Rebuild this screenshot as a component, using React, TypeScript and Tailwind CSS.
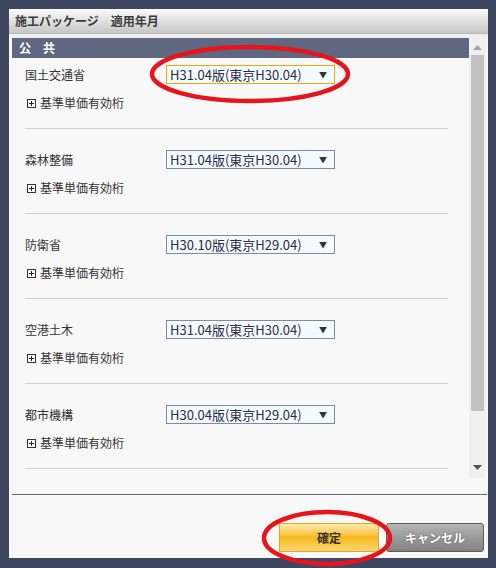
import React from "react";

const rows = [
  { label: "国土交通省", value: "H31.04版(東京H30.04)", active: true },
  { label: "森林整備", value: "H31.04版(東京H30.04)" },
  { label: "防衛省", value: "H30.10版(東京H29.04)" },
  { label: "空港土木", value: "H31.04版(東京H30.04)" },
  { label: "都市機構", value: "H30.04版(東京H29.04)" },
];

const font = { fontFamily: '"Noto Sans CJK JP", "Noto Sans", sans-serif' };

function PlusBox() {
  return (
    <svg width="9" height="9" viewBox="0 0 9 9" className="block">
      <rect x="0.5" y="0.5" width="8" height="8" fill="#fff" stroke="#333" />
      <path d="M2 4.5h5M4.5 2v5" stroke="#222" strokeWidth="1" />
    </svg>
  );
}

export default function App() {
  return (
    <div
      className="relative w-[496px] h-[568px] bg-[#3d4760] pl-[9px] pt-[9px] pr-[8px] pb-[10px] text-[12px] text-[#333]"
      style={font}
    >
      <div className="w-full h-full bg-[#f8f8f8] flex flex-col">
        {/* title bar */}
        <div className="h-[25px] shrink-0 bg-linear-to-b from-[#fbfbfb] to-[#c6c6c6] border-b border-[#b9b9b9] flex items-center pl-[6px] text-[12px] font-bold text-[#3c3c3c]">
          施工パッケージ　適用年月
        </div>
        <div className="h-[4px] shrink-0 bg-[#f0f0f0]" />
        {/* scroll region */}
        <div className="h-[440px] shrink-0 flex pl-[3px] pr-[2px]">
          <div className="w-[457px] h-full overflow-hidden">
            <div className="h-[20px] bg-[#5f6880] text-white font-bold flex items-center pl-[7px]">
              公　共
            </div>
            {rows.map((r, i) => (
              <div key={i} className={i === 0 ? "pt-[7px]" : "pt-[21px]"}>
                <div className="flex items-center h-[19px] pl-[13px]">
                  <div className="w-[141px]">{r.label}</div>
                  <div
                    className={
                      "w-[169px] h-[19px] bg-[#f2fbff] border flex items-center justify-between pl-[3px] pr-[7px] text-[#2f2a48] " +
                      (r.active ? "border-[#f2a600]" : "border-[#7a8aa8]")
                    }
                  >
                    <span className="leading-none text-[13px]">{r.value}</span>
                    <span className="text-[8px] leading-none text-[#333]">▼</span>
                  </div>
                </div>
                <div className="mt-[11px] h-[16px] flex items-center pl-[15px] gap-[4px]">
                  <PlusBox />
                  <span>基準単価有効桁</span>
                </div>
                <div className="mt-[17px] ml-[13px] w-[423px] h-[1px] bg-[#d0d0d0]" />
              </div>
            ))}
          </div>
          {/* scrollbar */}
          <div className="w-[17px] h-full bg-[#f0f0f0] flex flex-col items-center">
            <svg width="9" height="5" viewBox="0 0 9 5" className="mt-[7px]">
              <path d="M0 5L4.5 0L9 5Z" fill="#a3a3a3" />
            </svg>
            <div className="mt-[5px] w-[13px] h-[356px] bg-[#c1c1c1]" />
            <div className="flex-1" />
            <svg width="9" height="5" viewBox="0 0 9 5" className="mb-[8px]">
              <path d="M0 0L9 0L4.5 5Z" fill="#505050" />
            </svg>
          </div>
        </div>
        <div className="h-[16px] shrink-0" />
        <div className="ml-[3px] mr-[1px] h-[1px] bg-[#5f6880] shrink-0" />
        <div className="flex justify-end gap-[7px] pr-[4px] mt-[28px]">
          <div className="w-[100px] h-[29px] border border-[#e3a82a] bg-linear-to-b from-[#fdeaa8] via-[#f7ba0c] to-[#fad66e] flex items-center justify-center font-bold text-[#333]">
            確定
          </div>
          <div
            className="w-[98px] h-[29px] rounded-[3px] border border-[#5c5c5c] bg-linear-to-b from-[#b4b4b4] to-[#828282] flex items-center justify-center font-bold text-white text-[12px]"
            style={{ textShadow: "0 0 2px #555" }}
          >
            キャンセル
          </div>
        </div>
      </div>
      {/* red annotation ellipses */}
      <svg className="absolute left-0 top-0 pointer-events-none" width="496" height="568">
        <ellipse cx="250" cy="74" rx="98" ry="27" fill="none" stroke="#e8141c" strokeWidth="4.5" />
        <ellipse cx="327" cy="538" rx="63" ry="26" fill="none" stroke="#e8141c" strokeWidth="4.5" />
      </svg>
    </div>
  );
}
